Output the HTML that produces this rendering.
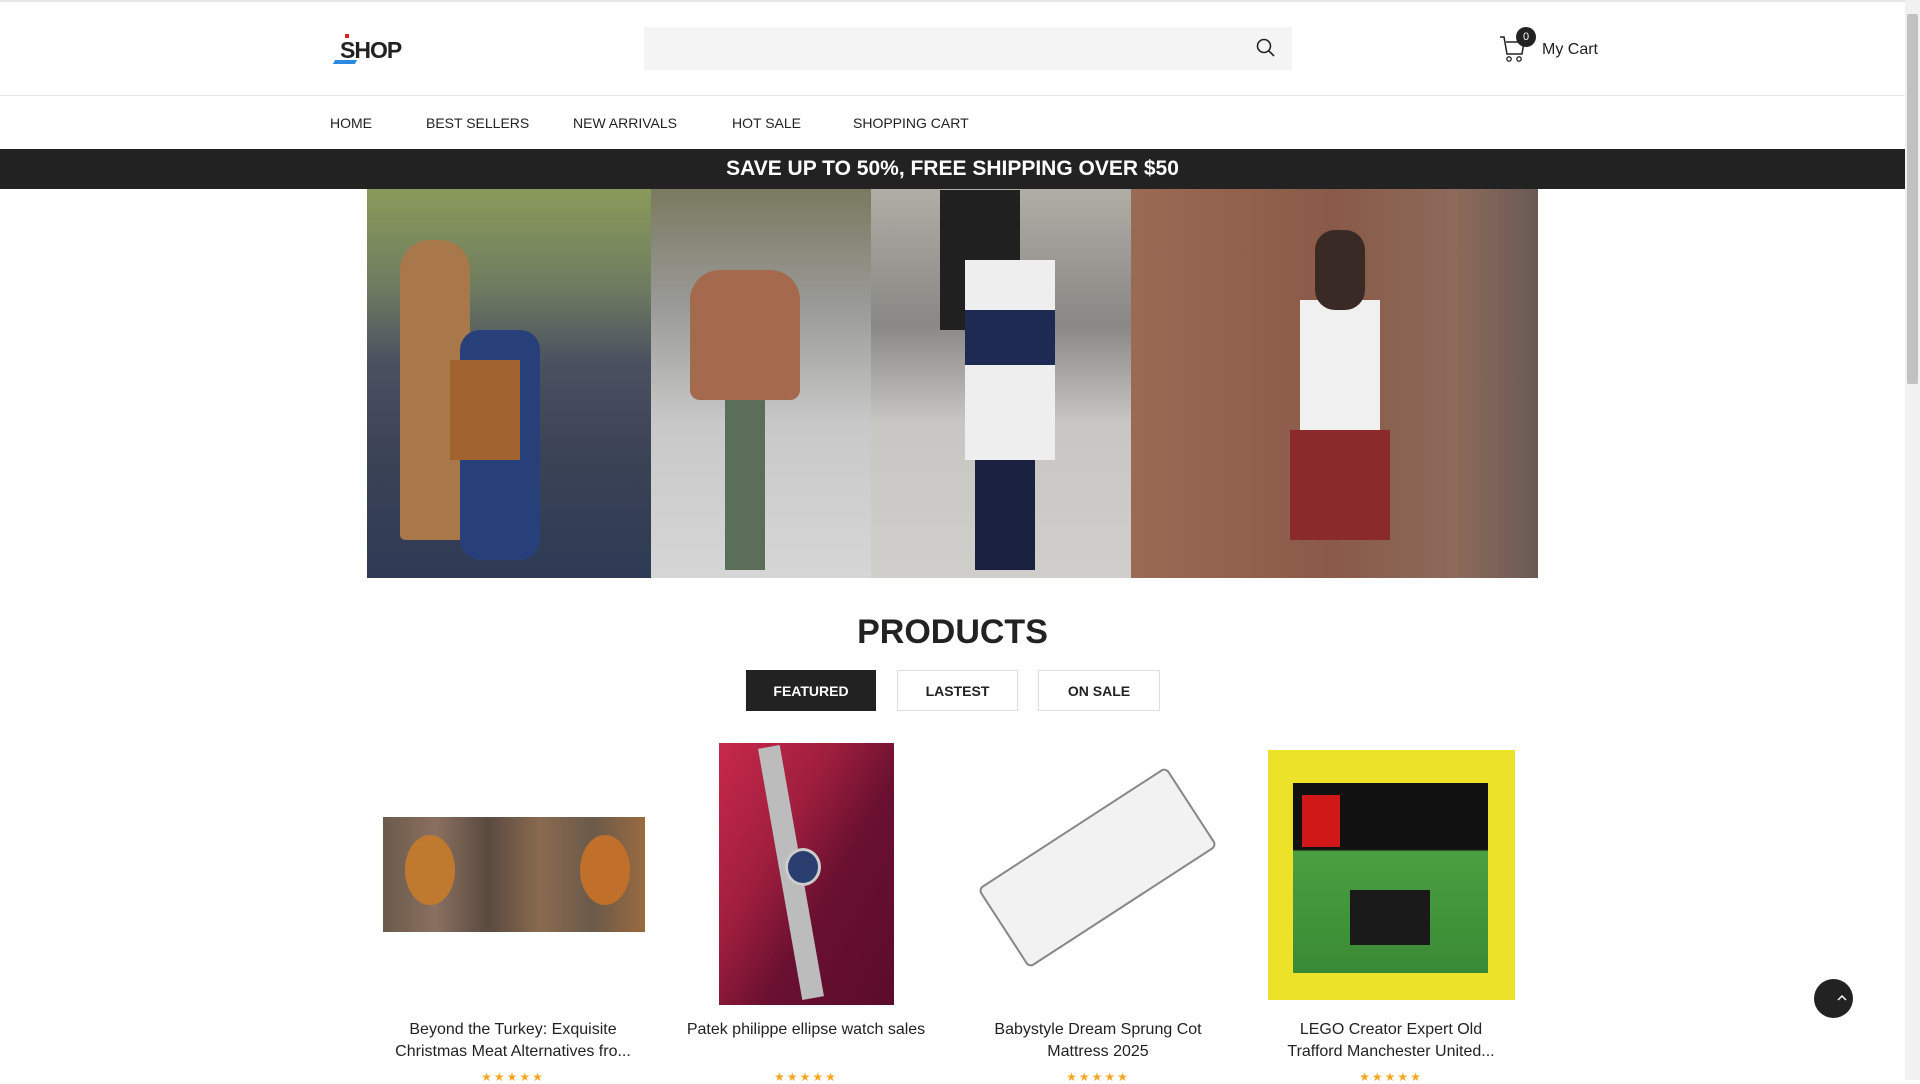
<!DOCTYPE html>
<html><head><meta charset="utf-8"><style>
*{margin:0;padding:0;box-sizing:border-box}
body{width:1920px;height:1080px;overflow:hidden;background:#fff;font-family:"Liberation Sans",sans-serif;color:#222;position:relative}
.a{position:absolute}
.nav span{position:absolute;top:115px;font-size:14px;color:#222}
.tab{position:absolute;top:670px;height:41px;border:1px solid #ddd;font-size:14px;font-weight:bold;display:flex;align-items:center;justify-content:center;background:#fff}
.t{position:absolute;top:1019px;width:280px;text-align:center;font-size:16px;line-height:22px;color:#222}
.st{position:absolute;top:1070px;width:280px;text-align:center;color:#f5a623;font-size:12px;letter-spacing:2px}
</style></head><body>
<div class="a" style="left:0;top:0;width:1905px;height:2px;background:#e5e5e5"></div>
<div class="a" style="left:1905px;top:0;width:15px;height:1080px;background:#f1f1f1"></div>
<div class="a" style="left:1907px;top:14px;width:11px;height:370px;background:#c1c1c1;border-radius:2px"></div>
<div class="a" style="left:340px;top:37px;font-size:23px;font-weight:bold;color:#222;letter-spacing:-1px">SHOP</div>
<div class="a" style="left:345px;top:34px;width:4px;height:4px;background:#d22"></div>
<div class="a" style="left:334px;top:60px;width:22px;height:4px;background:#2a8ae0;transform:skewX(-30deg)"></div>
<div class="a" style="left:644px;top:27px;width:648px;height:43px;background:#f4f4f4"></div>
<svg class="a" style="left:1256px;top:38px" width="20" height="20" viewBox="0 0 20 20"><circle cx="8" cy="8" r="6.5" fill="none" stroke="#222" stroke-width="1.6"/><path d="M13 13l5 5" stroke="#222" stroke-width="1.6"/></svg>
<svg class="a" style="left:1498px;top:34px" width="30" height="30" viewBox="0 0 30 30"><path d="M2 3h4l3 17h15l2-12H8" fill="none" stroke="#222" stroke-width="1.5"/><circle cx="11" cy="25" r="2.2" fill="none" stroke="#222" stroke-width="1.3"/><circle cx="21" cy="25" r="2.2" fill="none" stroke="#222" stroke-width="1.3"/></svg>
<div class="a" style="left:1516px;top:27px;width:20px;height:20px;border-radius:50%;background:#222;color:#fff;font-size:11px;text-align:center;line-height:20px">0</div>
<div class="a" style="left:1542px;top:41px;font-size:16px">My Cart</div>
<div class="a" style="left:0;top:95px;width:1905px;height:1px;background:#e5e5e5"></div>
<div class="nav"><span style="left:330px">HOME</span><span style="left:426px">BEST SELLERS</span><span style="left:573px">NEW ARRIVALS</span><span style="left:732px">HOT SALE</span><span style="left:853px">SHOPPING CART</span></div>
<div class="a" style="left:0;top:149px;width:1905px;height:40px;background:#222;color:#fff;font-size:21px;font-weight:bold;text-align:center;line-height:40px">SAVE UP TO 50%, FREE SHIPPING OVER $50</div>
<div class="a" style="left:367px;top:189px;width:284px;height:389px;background:linear-gradient(180deg,#8a9a5a 0%,#6f7d60 25%,#4a5060 45%,#3a4255 70%,#2e3a55 100%)"></div>
<div class="a" style="left:400px;top:240px;width:70px;height:300px;background:#a8784a;border-radius:30px 30px 5px 5px"></div>
<div class="a" style="left:460px;top:330px;width:80px;height:230px;background:#27407a;border-radius:20px"></div>
<div class="a" style="left:450px;top:360px;width:70px;height:100px;background:#a0622e"></div>
<div class="a" style="left:651px;top:189px;width:220px;height:389px;background:linear-gradient(180deg,#7a7a60 0%,#9a9a98 30%,#c8c8c8 60%,#d6d6d6 100%)"></div>
<div class="a" style="left:690px;top:270px;width:110px;height:130px;background:#a56a4e;border-radius:30px 30px 10px 10px"></div>
<div class="a" style="left:725px;top:400px;width:40px;height:170px;background:#5a6e5a"></div>
<div class="a" style="left:871px;top:189px;width:260px;height:389px;background:linear-gradient(180deg,#b0aca6 0%,#8a8884 35%,#c8c6c2 60%,#d0cecb 100%)"></div>
<div class="a" style="left:940px;top:190px;width:80px;height:140px;background:#202020"></div>
<div class="a" style="left:965px;top:260px;width:90px;height:200px;background:#eeeeee"></div>
<div class="a" style="left:965px;top:310px;width:90px;height:55px;background:#1e2a52"></div>
<div class="a" style="left:975px;top:460px;width:60px;height:110px;background:#1a2240"></div>
<div class="a" style="left:1131px;top:189px;width:407px;height:389px;background:linear-gradient(90deg,#9a6a55 0%,#8a5a48 50%,#8c6a5a 80%,#6a5a55 100%)"></div>
<div class="a" style="left:1300px;top:300px;width:80px;height:140px;background:#f0f0f0"></div>
<div class="a" style="left:1290px;top:430px;width:100px;height:110px;background:#8a2a2a"></div>
<div class="a" style="left:1315px;top:230px;width:50px;height:80px;background:#3a2a25;border-radius:20px"></div>
<div class="a" style="left:0;top:613px;width:1905px;text-align:center;font-size:34px;font-weight:bold;color:#222">PRODUCTS</div>
<div class="tab" style="left:746px;width:130px;background:#222;color:#fff;border-color:#222">FEATURED</div>
<div class="tab" style="left:897px;width:121px">LASTEST</div>
<div class="tab" style="left:1038px;width:122px">ON SALE</div>
<div class="a" style="left:383px;top:817px;width:262px;height:115px;background:linear-gradient(90deg,#6a5a4a,#8a7060 20%,#5a4a40 40%,#8a6a50 60%,#6a5a4a 80%,#9a6a40)"></div>
<div class="a" style="left:405px;top:835px;width:50px;height:70px;background:#c07a30;border-radius:50%"></div>
<div class="a" style="left:580px;top:835px;width:50px;height:70px;background:#c0702a;border-radius:50%"></div>
<div class="a" style="left:719px;top:743px;width:175px;height:262px;background:linear-gradient(120deg,#c8284a 0%,#a01e3e 35%,#6a1030 60%,#5a0c28 100%)"></div>
<div class="a" style="left:780px;top:745px;width:22px;height:255px;background:#bcbcbc;transform:rotate(-10deg)"></div>
<div class="a" style="left:785px;top:848px;width:36px;height:38px;background:#2a3e70;border:3px solid #ccc;border-radius:50%"></div>
<div class="a" style="left:985px;top:820px;width:225px;height:95px;background:#f2f2f2;border:2px solid #888;border-radius:6px;transform:rotate(-33deg)"></div>
<div class="a" style="left:1268px;top:750px;width:247px;height:250px;background:#ece22a"></div>
<div class="a" style="left:1293px;top:783px;width:195px;height:190px;background:linear-gradient(180deg,#111 0%,#111 35%,#4aa040 36%,#3a8a35 100%)"></div>
<div class="a" style="left:1302px;top:795px;width:38px;height:52px;background:#d01818"></div>
<div class="a" style="left:1350px;top:890px;width:80px;height:55px;background:#1a1a1a"></div>
<div class="t" style="left:373px">Beyond the Turkey: Exquisite<br>Christmas Meat Alternatives fro...</div>
<div class="t" style="left:666px">Patek philippe ellipse watch sales</div>
<div class="t" style="left:958px">Babystyle Dream Sprung Cot<br>Mattress 2025</div>
<div class="t" style="left:1251px">LEGO Creator Expert Old<br>Trafford Manchester United...</div>
<div class="st" style="left:373px">★★★★★</div><div class="st" style="left:666px">★★★★★</div><div class="st" style="left:958px">★★★★★</div><div class="st" style="left:1251px">★★★★★</div>
<div class="a" style="left:1814px;top:979px;width:39px;height:39px;border-radius:50%;background:#222"></div>
<svg class="a" style="left:1836px;top:992px" width="12" height="12" viewBox="0 0 12 12"><path d="M2 8l4-4 4 4" stroke="#fff" stroke-width="1.5" fill="none"/></svg>
</body></html>
